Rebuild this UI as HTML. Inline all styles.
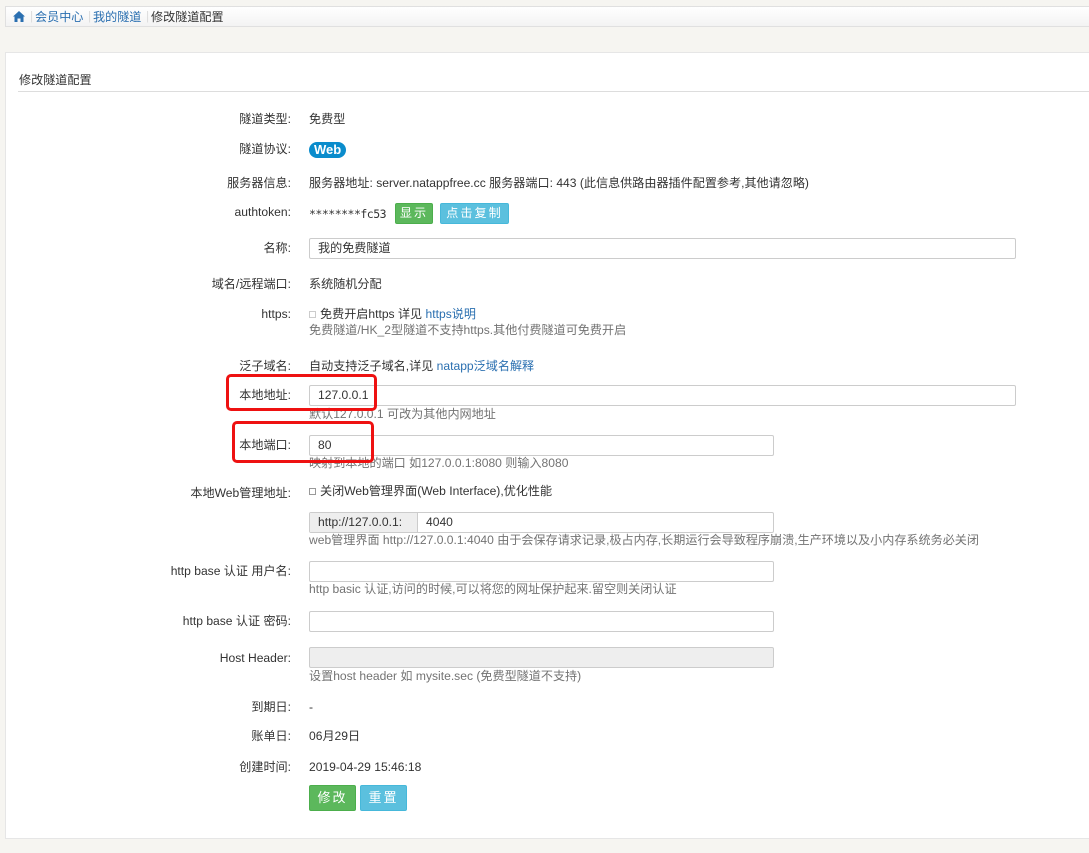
<!DOCTYPE html>
<html><head><meta charset="utf-8"><style>
*{box-sizing:border-box;margin:0;padding:0}
body{width:1089px;height:853px;background:#f6f5f1;font-family:"Liberation Sans","Noto Sans CJK SC",sans-serif;font-size:12.1px;color:#333;position:relative;overflow:hidden}
.a{position:absolute;white-space:nowrap;line-height:16px}
.l{position:absolute;right:798px;text-align:right;white-space:nowrap;line-height:16px}
.h{color:#737373}
.inp{position:absolute;left:309px;height:21px;border:1px solid #ccc;border-radius:2px;background:#fff;padding:0 8px;line-height:19px}
a{color:#2a6fb0;text-decoration:none}
.btn{position:absolute;color:#fff;border-radius:2px;text-align:center;letter-spacing:2px}
.red{position:absolute;border:3px solid #ee1111;border-radius:5px}
.cb{display:inline-block;width:7px;height:7px;border:1px solid #999;margin-right:4px;vertical-align:0}
</style></head><body>
<div style="position:absolute;left:5px;top:6px;width:1084px;height:21px;background:linear-gradient(#fff,#f3f3f3);border:1px solid #e0e0e0;border-right:none"></div>
<svg style="position:absolute;left:13px;top:11px" width="12" height="11" viewBox="0 0 12 11"><path d="M6 0L0 5.5H1.5V11H4.5V7.5H7.5V11H10.5V5.5H12Z" fill="#2a6fb0"/></svg>
<div class="a" style="left:35px;top:9px;color:#2a6fb0">会员中心</div>
<div class="a" style="left:93px;top:9px;color:#2a6fb0">我的隧道</div>
<div class="a" style="left:151px;top:9px">修改隧道配置</div>
<div class="a" style="left:30px;top:8px;color:#ddd">|</div>
<div class="a" style="left:88px;top:8px;color:#ddd">|</div>
<div class="a" style="left:146px;top:8px;color:#ddd">|</div>
<div style="position:absolute;left:5px;top:52px;width:1084px;height:787px;background:#fff;border:1px solid #e6e6e6;border-right:none"></div>
<div class="a" style="left:19px;top:72px">修改隧道配置</div>
<div style="position:absolute;left:18px;top:91px;width:1071px;height:1px;background:#ddd"></div>

<div class="l" style="top:111px">隧道类型:</div><div class="a" style="left:309px;top:111px">免费型</div>
<div class="l" style="top:141px">隧道协议:</div><div class="a" style="left:309px;top:142px;background:#0a8ccc;color:#fff;font-weight:bold;border-radius:8px;padding:0 5px;font-size:13px">Web</div>
<div class="l" style="top:175px">服务器信息:</div><div class="a" style="left:309px;top:175px">服务器地址: server.natappfree.cc 服务器端口: 443 (此信息供路由器插件配置参考,其他请忽略)</div>
<div class="l" style="top:204px">authtoken:</div><div class="a" style="left:309px;top:206px;font-family:'DejaVu Sans Mono',monospace;font-size:11.5px;letter-spacing:-0.5px">********fc53</div>
<div class="btn" style="left:395px;top:203px;width:38px;height:21px;line-height:19px;background:#5cb85c;border:1px solid #4cae4c">显示</div>
<div class="btn" style="left:440px;top:203px;width:69px;height:21px;line-height:19px;background:#5bc0de;border:1px solid #46b8da">点击复制</div>
<div class="l" style="top:240px">名称:</div><div class="inp" style="top:238px;width:707px">我的免费隧道</div>
<div class="l" style="top:276px">域名/远程端口:</div><div class="a" style="left:309px;top:276px">系统随机分配</div>
<div class="l" style="top:306px">https:</div><div class="a" style="left:309px;top:306px"><span class="cb" style="border-color:#ccc"></span>免费开启https 详见 <a>https说明</a></div>
<div class="a h" style="left:309px;top:322px">免费隧道/HK_2型隧道不支持https.其他付费隧道可免费开启</div>
<div class="l" style="top:358px">泛子域名:</div><div class="a" style="left:309px;top:358px">自动支持泛子域名,详见 <a>natapp泛域名解释</a></div>
<div class="l" style="top:387px">本地地址:</div><div class="inp" style="top:385px;width:707px">127.0.0.1</div>
<div class="a h" style="left:309px;top:406px">默认127.0.0.1 可改为其他内网地址</div>
<div class="l" style="top:437px">本地端口:</div><div class="inp" style="top:435px;width:465px">80</div>
<div class="a h" style="left:309px;top:455px">映射到本地的端口 如127.0.0.1:8080 则输入8080</div>
<div class="l" style="top:485px">本地Web管理地址:</div><div class="a" style="left:309px;top:483px"><span class="cb"></span>关闭Web管理界面(Web Interface),优化性能</div>
<div class="inp" style="top:512px;width:465px;padding:0"><span style="display:inline-block;width:108px;height:19px;background:#eee;border-right:1px solid #ccc;padding-left:8px">http://127.0.0.1:</span><span style="padding-left:8px">4040</span></div>
<div class="a h" style="left:309px;top:532px">web管理界面 http://127.0.0.1:4040 由于会保存请求记录,极占内存,长期运行会导致程序崩溃,生产环境以及小内存系统务必关闭</div>
<div class="l" style="top:563px">http base 认证 用户名:</div><div class="inp" style="top:561px;width:465px"></div>
<div class="a h" style="left:309px;top:581px">http basic 认证,访问的时候,可以将您的网址保护起来.留空则关闭认证</div>
<div class="l" style="top:613px">http base 认证 密码:</div><div class="inp" style="top:611px;width:465px"></div>
<div class="l" style="top:650px">Host Header:</div><div class="inp" style="top:647px;width:465px;background:#eee"></div>
<div class="a h" style="left:309px;top:668px">设置host header 如 mysite.sec (免费型隧道不支持)</div>
<div class="l" style="top:699px">到期日:</div><div class="a" style="left:309px;top:699px">-</div>
<div class="l" style="top:728px">账单日:</div><div class="a" style="left:309px;top:728px">06月29日</div>
<div class="l" style="top:759px">创建时间:</div><div class="a" style="left:309px;top:759px">2019-04-29 15:46:18</div>
<div class="btn" style="left:309px;top:785px;width:47px;height:26px;line-height:24px;background:#5cb85c;border:1px solid #4cae4c;font-size:13px">修改</div>
<div class="btn" style="left:360px;top:785px;width:47px;height:26px;line-height:24px;background:#5bc0de;border:1px solid #46b8da;font-size:13px">重置</div>
<div class="red" style="left:226px;top:374px;width:151px;height:37px"></div>
<div class="red" style="left:232px;top:421px;width:142px;height:42px"></div>
</body></html>
